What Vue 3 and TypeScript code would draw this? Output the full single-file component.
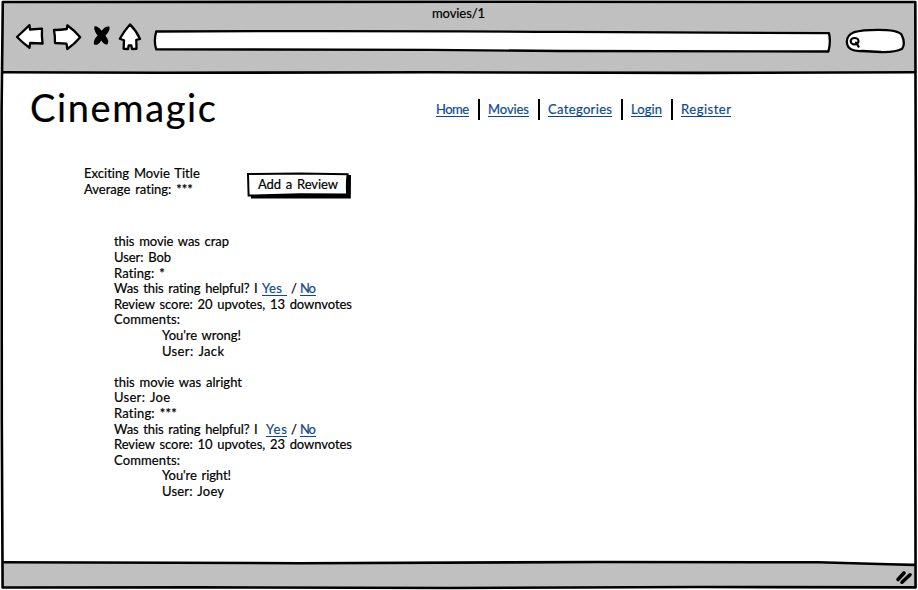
<script setup lang="ts">
interface Segment { text: string; width: number; link?: boolean; before?: number }
interface Line { parts: Segment[]; indent?: boolean }

const nav: Segment[] = [
  { text: 'Home', width: 33 },
  { text: 'Movies', width: 41 },
  { text: 'Categories', width: 64 },
  { text: 'Login', width: 31 },
  { text: 'Register', width: 50 },
]

const line = (text: string, width: number, indent = false): Line => ({ parts: [{ text, width }], indent })

const reviews: Line[][] = [
  [
    line('this movie was crap', 115),
    line('User: Bob', 57),
    line('Rating: *', 51),
    { parts: [
      { text: 'Was this rating helpful? I', width: 144 },
      { text: 'Yes\u00a0', width: 25, link: true, before: 4 },
      { text: '/', width: 5, before: 4 },
      { text: 'No', width: 16, link: true, before: 4 },
    ] },
    line('Review score: 20 upvotes, 13 downvotes', 238),
    line('Comments:', 66),
    line("You're wrong!", 79, true),
    line('User: Jack', 62, true),
  ],
  [
    line('this movie was alright', 128),
    line('User: Joe', 56),
    line('Rating: ***', 63),
    { parts: [
      { text: 'Was this rating helpful? I', width: 144 },
      { text: 'Yes', width: 21, link: true, before: 8 },
      { text: '/', width: 5, before: 4 },
      { text: 'No', width: 16, link: true, before: 4 },
    ] },
    line('Review score: 10 upvotes, 23 downvotes', 238),
    line('Comments:', 66),
    line("You're right!", 69, true),
    line('User: Joey', 62, true),
  ],
]

// Tracks a label out (or in) so that it fills the given width.
const vFit = {
  mounted(el: HTMLElement, binding: { value: number }) {
    const count = (el.textContent ?? '').length
    const natural = el.getBoundingClientRect().width
    if (count > 1) el.style.letterSpacing = `${(binding.value - natural) / (count - 1)}px`
    el.style.width = `${binding.value}px`
  },
}
</script>

<template>
  <div class="browser">
    <header class="chrome">
      <div class="caption"><span v-fit="53" class="fit">movies/1</span></div>
      <div class="toolbar">
        <svg class="tools" width="142" height="34" viewBox="0 22 142 34">
          <path class="shape" d="M17 37 L29.5 25.2 L30 29.5 L42 28.7 Q41.5 36 42.6 43.5 L30.2 43 L29.5 47.8 Q23 43 17 37Z" />
          <path class="shape" d="M54 30 Q61 29.8 66.8 29 L67.3 25.3 Q74.5 30.5 80.2 37.2 Q74.5 44 67.3 49 L66.5 43.6 L55 43 Q55.2 36.5 54 30Z" />
          <path class="blot" d="M94.5 26.3 Q98 25.8 101.6 30.8 Q105.5 25.6 109.4 26.6 Q110.5 30.5 105.4 35.8 Q109.9 41 107.2 44.4 Q104.5 45.2 101.2 40.4 Q98.3 45.6 94.3 44.7 Q92.4 40.8 97.6 35.6 Q93.2 30 94.5 26.3Z" />
          <path class="shape" d="M130 24.4 Q136.5 31 140 39 L136.3 39.8 L136.5 48.8 L132 49 L131.3 45.4 L128.7 45.4 L128 49 L123.6 48.8 L124 40.3 L119.8 38.7 Q124 31 130 24.4Z" />
        </svg>
        <svg class="address" width="680" height="34" viewBox="152 22 680 34">
          <path class="shape" d="M156.2 31.5 Q350 30.6 565 31.9 L829 33.2 Q831 42 828.4 51.5 L560 51 L430 49.8 L156.2 49.3 Q153.5 41 156.2 31.5Z" />
        </svg>
        <svg class="search" width="62" height="34" viewBox="844 22 62 34">
          <path class="shape" d="M854 32.2 Q862 29.8 878 29.8 Q898 29.8 901.5 34.5 Q905.8 43 902.2 48.7 Q895 52.4 881 52 L862 51 Q847.2 52 846.8 41.5 Q847 35 854 32.2Z" />
          <ellipse class="lens" cx="854.6" cy="41.2" rx="3.9" ry="3.2" />
          <path class="lens" d="M856 42.6 L858.6 46.6" />
        </svg>
      </div>
    </header>

    <main class="page">
      <div class="masthead">
        <h1><span v-fit="186" class="fit">Cinemagic</span></h1>
        <nav>
          <span v-for="item in nav" :key="item.text" class="item">
            <a v-fit="item.width" class="fit link">{{ item.text }}</a>
          </span>
        </nav>
      </div>

      <section class="movie">
        <div class="summary">
          <div class="row"><span v-fit="116" class="fit">Exciting Movie Title</span></div>
          <div class="row"><span v-fit="109" class="fit">Average rating: ***</span></div>
        </div>
        <button type="button">
          <svg class="plate" width="106" height="30" viewBox="246 171 106 30">
            <path class="shadow" d="M250 175.5 L351 175 L350.8 198.5 L251 198.6Z" />
            <path class="face" d="M248 174 L300 173.4 L347.6 174.2 Q346.4 184 347.2 194.4 L300 194.3 L248.6 195.6Z" />
          </svg>
          <span v-fit="80" class="fit label">Add a Review</span>
        </button>
      </section>

      <section class="reviews">
        <article v-for="(review, r) in reviews" :key="r">
          <div v-for="(row, i) in review" :key="i" class="row" :class="{ indent: row.indent }">
            <template v-for="(part, p) in row.parts" :key="p">
              <span v-fit="part.width" class="fit" :class="{ link: part.link, ['gap' + part.before]: part.before }">{{ part.text }}</span>
            </template>
          </div>
        </article>
      </section>
    </main>

    <footer>
      <svg class="grip" width="22" height="20" viewBox="893 567 22 20">
        <path d="M898 579.5 L904 573" />
        <path d="M902 582.2 L910 574.8" />
      </svg>
    </footer>

    <svg class="outline" width="918" height="590" viewBox="0 0 918 590">
      <path d="M2.8 2 L500 1.8 L915.3 2 L915.8 200 L915.2 400 L915.6 587.4 L700 587 L450 588 L200 587.4 L2.6 587.5 L1.8 420 L1.6 110 Z" />
      <path d="M2.5 72.3 L160 72.8 L430 72.3 L700 72.9 L915 72.2" />
      <path d="M2.5 562.2 L300 563.2 L600 562 L818 562.3 L915 565" />
    </svg>
  </div>
</template>

<style>
body {
  background: #fff;
}
</style>

<style scoped>
.browser {
  position: relative;
  box-sizing: border-box;
  width: 918px;
  height: 590px;
  padding: 2px 3px;
  display: flex;
  flex-direction: column;
  overflow: hidden;
  color: #000;
  font-family: Lato, "Liberation Sans", sans-serif;
  font-size: 13px;
  line-height: 15.6px;
  word-spacing: 1.5px;
  -webkit-text-stroke: 0.2px currentColor;
}
.fit {
  display: inline-block;
  white-space: nowrap;
}
.chrome {
  height: 71px;
  flex: none;
  background: #c0c0c0;
}
.caption {
  height: 20px;
  padding: 4px 0 0 429px;
  box-sizing: border-box;
}
.toolbar {
  display: flex;
  height: 34px;
}
.tools { margin-left: -3px; flex: none; }
.address { margin-left: 10px; flex: none; }
.search { margin-left: 12px; flex: none; }
.shape {
  fill: #fff;
  stroke: #000;
  stroke-width: 2.3;
  stroke-linejoin: round;
}
.blot { fill: #000; }
.lens {
  fill: none;
  stroke: #000;
  stroke-width: 2.2;
  stroke-linecap: round;
}
.page {
  flex: 1;
  min-height: 0;
  background: #fff;
}
.masthead {
  display: flex;
  height: 84px;
}
h1 {
  width: 405px;
  box-sizing: border-box;
  margin: 0;
  padding: 11px 0 0 27px;
  font-size: 38px;
  line-height: 46px;
  font-weight: 400;
  -webkit-text-stroke: 0.2px currentColor;
}
nav {
  display: flex;
  align-items: flex-start;
  padding: 26px 0 0 28px;
}
.item {
  height: 21px;
  padding-top: 3px;
  box-sizing: border-box;
}
.item + .item {
  margin-left: 9px;
  padding-left: 8px;
  border-left: 2px solid #000;
}
.link {
  height: 14px;
  color: #0b4a8f;
  line-height: 15.6px;
  border-bottom: 1px solid currentColor;
}
.item .link { line-height: 14px; }
.movie {
  display: flex;
  height: 77.4px;
  padding-left: 81px;
}
.summary {
  width: 162px;
  padding-top: 9px;
}
.row {
  display: flex;
  height: 15.6px;
}
.indent { padding-left: 48px; }
.gap4 { margin-left: 4px; }
.gap5 { margin-left: 5px; }
.gap8 { margin-left: 8px; }
button {
  display: grid;
  justify-items: start;
  align-items: start;
  width: 106px;
  height: 30px;
  margin: 14px 0 0;
  padding: 0;
  border: 0;
  background: none;
  color: inherit;
  font: inherit;
  word-spacing: inherit;
  text-align: left;
}
.plate, .label { grid-area: 1 / 1; }
.label { margin: 6px 0 0 12px; }
.shadow { fill: #000; }
.face {
  fill: #fff;
  stroke: #000;
  stroke-width: 2;
}
.reviews { padding-left: 111px; }
article + article { margin-top: 15.6px; }
footer {
  display: flex;
  height: 25px;
  flex: none;
  background: #c0c0c0;
}
.grip {
  margin: 4px 0 0 890px;
  fill: none;
  stroke: #000;
  stroke-width: 3.6;
  stroke-linecap: round;
}
.outline {
  position: absolute;
  inset: 0;
  pointer-events: none;
  fill: none;
  stroke: #000;
  stroke-width: 2.6;
  stroke-linejoin: round;
}
</style>
